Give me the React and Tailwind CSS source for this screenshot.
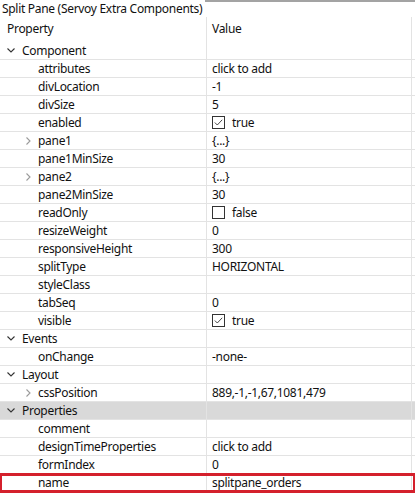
import React from 'react';

const ROWS = [
    { name: 'Component', group: true },
    { name: 'attributes', value: 'click to add' },
    { name: 'divLocation', value: '-1' },
    { name: 'divSize', value: '5' },
    { name: 'enabled', check: true, value: 'true' },
    { name: 'pane1', value: '{...}', expand: true },
    { name: 'pane1MinSize', value: '30' },
    { name: 'pane2', value: '{...}', expand: true },
    { name: 'pane2MinSize', value: '30' },
    { name: 'readOnly', check: false, value: 'false' },
    { name: 'resizeWeight', value: '0' },
    { name: 'responsiveHeight', value: '300' },
    { name: 'splitType', value: 'HORIZONTAL' },
    { name: 'styleClass', value: '' },
    { name: 'tabSeq', value: '0' },
    { name: 'visible', check: true, value: 'true' },
    { name: 'Events', group: true },
    { name: 'onChange', value: '-none-' },
    { name: 'Layout', group: true },
    { name: 'cssPosition', value: '889,-1,-1,67,1081,479', expand: true },
    { name: 'Properties', group: true, selected: true },
    { name: 'comment', value: '' },
    { name: 'designTimeProperties', value: 'click to add' },
    { name: 'formIndex', value: '0' },
    { name: 'name', value: 'splitpane_orders', marked: true },
];

function ChevronDown() {
    return (
        <svg width="8" height="5" viewBox="0 0 8 5" className="shrink-0">
            <path d="M0.5 0.5 L4 4 L7.5 0.5" fill="none" stroke="#333" strokeWidth="1.1" />
        </svg>
    );
}

function ChevronRight() {
    return (
        <svg width="5" height="8" viewBox="0 0 5 8" className="shrink-0">
            <path d="M0.5 0.5 L4 4 L0.5 7.5" fill="none" stroke="#9a9a9a" strokeWidth="1.1" />
        </svg>
    );
}

function Checkbox({ checked }) {
    return (
        <span className="w-[13px] h-[13px] border border-[#333] bg-white flex items-center justify-center shrink-0">
            {checked && (
                <svg width="9" height="7" viewBox="0 0 9 7">
                    <path d="M0.8 3.5 L3.3 6 L8.2 0.8" fill="none" stroke="#333" strokeWidth="0.9" />
                </svg>
            )}
        </span>
    );
}

function Row({ r }) {
    const rowCls = r.selected
        ? 'bg-[#d9d9d9]'
        : r.marked
            ? 'outline-[3px] outline-[#d4202c] -outline-offset-2'
            : '';
    return (
        <div className={`grid grid-cols-[207px_205px] h-[18px] border-b border-[#e3e3e3] relative ${rowCls}`}>
            <div className="flex items-center border-r border-[#e3e3e3] overflow-hidden whitespace-nowrap">
                {r.group ? (
                    <div className="flex items-center pl-[7px] gap-[7px]">
                        <ChevronDown />
                        <span>{r.name}</span>
                    </div>
                ) : (
                    <div className="flex items-center pl-[26px]">
                        <span className="w-[12px] flex">{r.expand && <ChevronRight />}</span>
                        <span>{r.name}</span>
                    </div>
                )}
            </div>
            <div className="flex items-center pl-[5px] border-r border-[#e3e3e3] whitespace-nowrap overflow-hidden">
                {r.check !== undefined ? (
                    <div className="flex items-center gap-[7px]">
                        <Checkbox checked={r.check} />
                        <span>{r.value}</span>
                    </div>
                ) : (
                    <span>{r.value}</span>
                )}
            </div>
        </div>
    );
}

export default function App() {
    return (
        <div className="w-[415px] h-[494px] bg-white overflow-hidden text-[12px] leading-none tracking-[-0.3px] text-[#111]" style={{ fontFamily: '"Noto Sans", "Open Sans", sans-serif' }}>
            <div className="flex h-[17px]">
                <span className="pl-[2px] pr-[3px] pt-[3px] whitespace-nowrap">Split Pane (Servoy Extra Components)</span>
                <div className="flex-1 border-t-2 border-[#a3a3a3]" />
            </div>
            <div className="grid grid-cols-[207px_205px] h-[25px]">
                <div className="flex items-center pl-[7px] pb-[1px] border-r border-[#e3e3e3]">Property</div>
                <div className="flex items-center pl-[5px] pb-[1px] border-r border-[#e3e3e3]">Value</div>
            </div>
            {ROWS.map(r => <Row key={r.name} r={r} />)}
        </div>
    );
}
